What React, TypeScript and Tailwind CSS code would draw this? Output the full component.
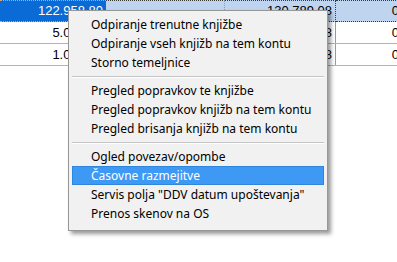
import React from "react";

const MENU: (string | null)[] = [
  "Odpiranje trenutne knjižbe",
  "Odpiranje vseh knjižb na tem kontu",
  "Storno temeljnice",
  null,
  "Pregled popravkov te knjižbe",
  "Pregled popravkov knjižb na tem kontu",
  "Pregled brisanja knjižb na tem kontu",
  null,
  "Ogled povezav/opombe",
  "Časovne razmejitve",
  'Servis polja "DDV datum upoštevanja"',
  "Prenos skenov na OS",
];

const ACTIVE = "Časovne razmejitve";

const ROWS = [
  { a: "122.958,80", b: "", c: "130.789,08", d: "0,00" },
  { a: "5.000,00", b: "", c: "5.120,08", d: "0,00" },
  { a: "1.000,00", b: "", c: "1.024,08", d: "0,00" },
];

export default function App() {
  return (
    <div className="relative h-[262px] w-[397px] overflow-hidden bg-white font-['Liberation_Sans',Arial,sans-serif] text-[13px] text-black">
      <div className="flex flex-col">
        {ROWS.map((r, i) => (
          <Row key={i} row={r} selected={i === 0} />
        ))}
      </div>
      <ContextMenu />
    </div>
  );
}

function Row({ row, selected }: { row: (typeof ROWS)[number]; selected: boolean }) {
  if (selected) {
    return (
      <div className="flex h-[22px] w-[480px]">
        <div className="flex w-[106px] shrink-0 items-center justify-end border-y border-dotted border-[#f0a050] bg-[#0a6bd6] pr-[3px] text-white">
          {row.a}
        </div>
        <div className="flex w-[119px] shrink-0 items-center justify-end border-y border-r border-dotted border-[#3a3a3a] border-r-[#9a9a9a] bg-[#bfd4ee] pr-[3px]">
          {row.b}
        </div>
        <div className="flex w-[111px] shrink-0 items-center justify-end border-y border-r border-dotted border-[#3a3a3a] bg-[#bfd4ee] pr-[3px]">
          {row.c}
        </div>
        <div className="flex w-[84px] shrink-0 items-center justify-end border-y border-dotted border-[#3a3a3a] bg-[#bfd4ee] pr-[3px]">
          {row.d}
        </div>
      </div>
    );
  }
  return (
    <div className="flex h-[22px] w-[480px] border-b border-[#b4b4b4]">
      <div className="flex w-[106px] shrink-0 items-center justify-end pr-[3px]">{row.a}</div>
      <div className="flex w-[119px] shrink-0 items-center justify-end border-r border-[#b4b4b4] pr-[3px]">{row.b}</div>
      <div className="flex w-[111px] shrink-0 items-center justify-end border-r border-[#9a9a9a] pr-[3px]">{row.c}</div>
      <div className="flex w-[84px] shrink-0 items-center justify-end pr-[3px]">{row.d}</div>
    </div>
  );
}

function ContextMenu() {
  return (
    <div className="absolute left-[68px] top-[10px] w-[260px] border border-[#979797] bg-[#f1f1f1] px-[3px] pb-[7px] pt-[4px] font-['Noto_Sans',sans-serif] text-[12px] shadow-[3px_3px_4px_rgba(0,0,0,0.4)]">
      {MENU.map((item, i) =>
        item === null ? (
          <div key={i} className="flex h-[9px] items-center">
            <div className="h-[2px] w-full border-t border-b border-t-[#c5c5c5] border-b-white" />
          </div>
        ) : (
          <div
            key={i}
            className={[
              "flex h-[19px] items-center whitespace-nowrap border pl-[18px]",
              item === ACTIVE ? "border-[#2f86dd] bg-[#3d99f3] text-white" : "border-transparent text-black",
            ].join(" ")}
          >
            {item}
          </div>
        ),
      )}
    </div>
  );
}
